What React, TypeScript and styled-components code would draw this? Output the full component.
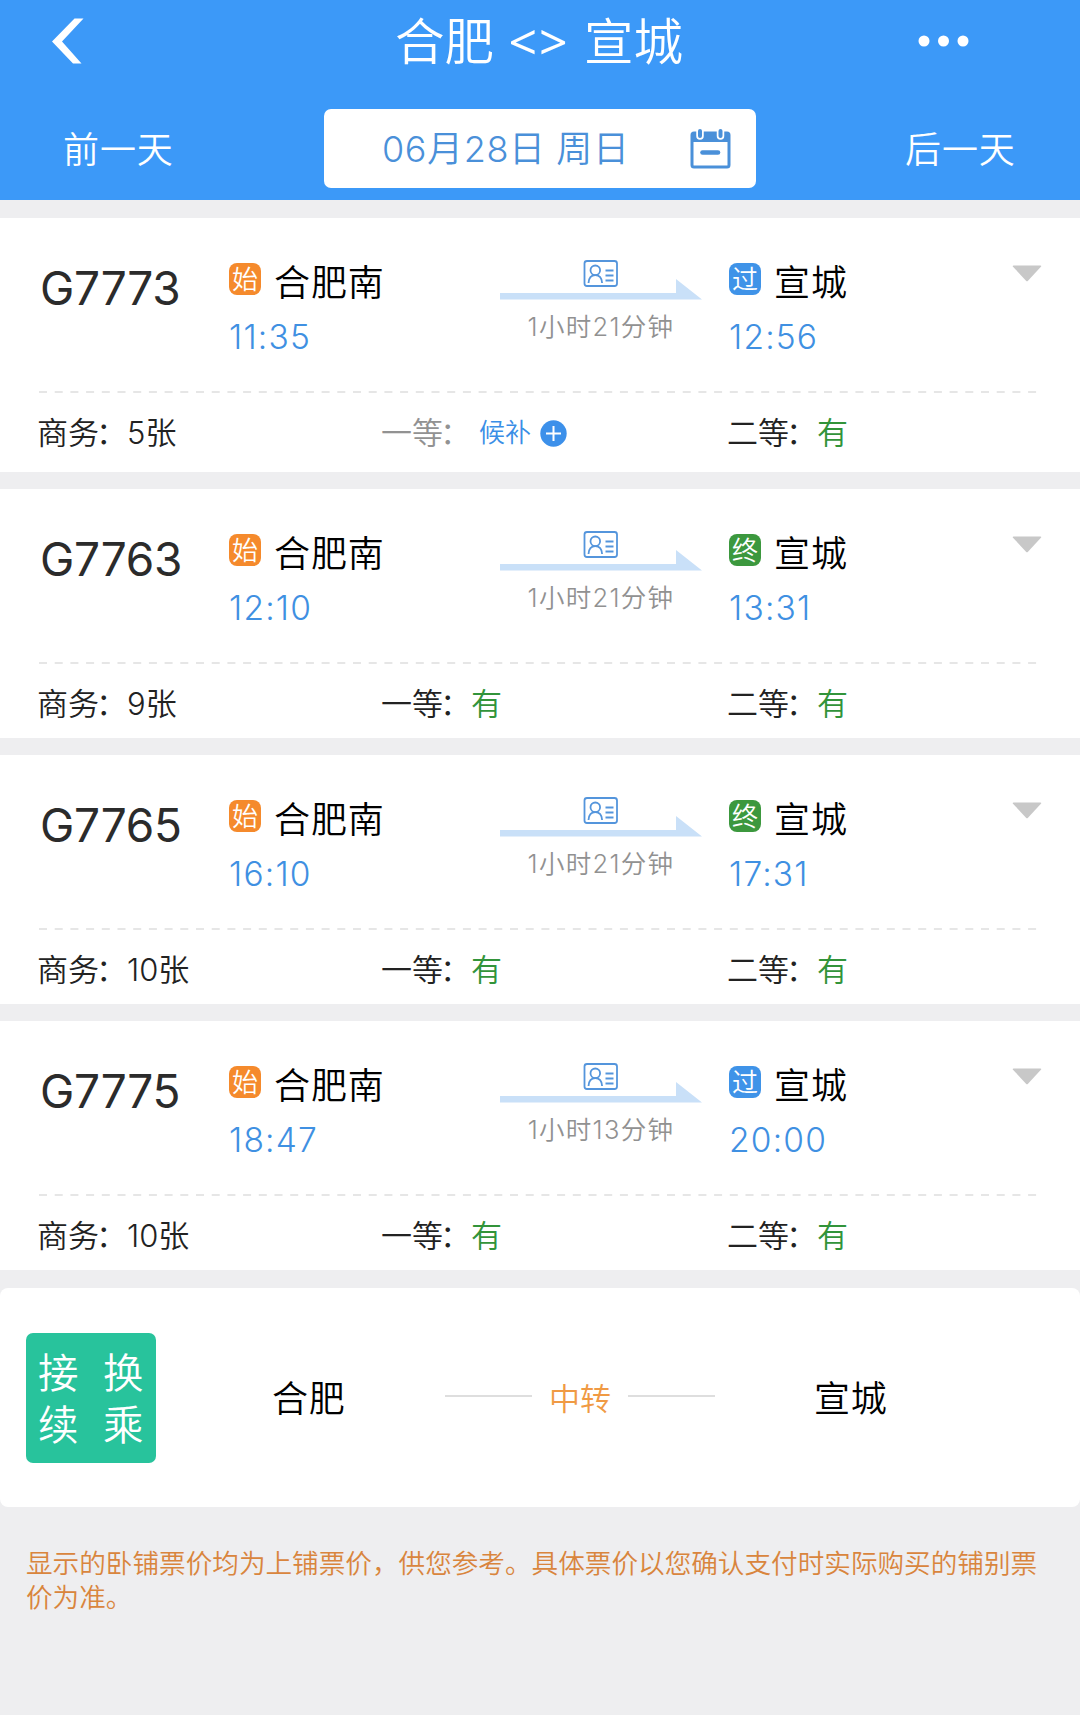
import React from "react";
import styled, { createGlobalStyle } from "styled-components";

const Global = createGlobalStyle`
  * { box-sizing: border-box; }
  body {
    margin: 0;
    background: #eeeef0;
    font-family: Inter, "Noto Sans CJK SC", sans-serif;
    font-weight: 350;
    color: #2b2b2b;
  }
`;

const Page = styled.div`
  width: 1080px;
  height: 1715px;
  overflow: hidden;
  background: #eeeef0;
`;

const Header = styled.header`
  height: 200px;
  margin-bottom: 18px;
  background: #3c99f8;
  color: #fff;
`;

const TitleBar = styled.div`
  display: grid;
  grid-template-columns: 324px 432px 1fr;
  align-items: center;
  height: 82px;
`;

const BackIcon = styled.svg`
  display: block;
  margin-left: 50px;
`;

const MoreIcon = styled.svg`
  display: block;
  margin-left: 160px;
`;

const Title = styled.h1`
  margin: 1px 2px 0 0;
  font-size: 49.5px;
  line-height: 60px;
  font-weight: 350;
  text-align: center;
  white-space: pre;
`;

const Arrows = styled.span`
  display: inline-block;
  width: 90px;
  font-family: "Noto Sans", sans-serif;
  font-size: 50px;
  font-weight: 400;
  letter-spacing: 2px;
`;

const DateBar = styled.div`
  display: grid;
  grid-template-columns: 324px 432px 1fr;
  align-items: center;
  margin-top: 27px;
  height: 79px;
`;

const DayLink = styled.div<{ $indent: number }>`
  padding: 2px 0 0 ${(p) => p.$indent}px;
  font-size: 36px;
  line-height: 44px;
  letter-spacing: 0.9px;
`;

const DateBox = styled.div`
  display: flex;
  align-items: center;
  justify-content: space-between;
  height: 79px;
  padding: 0 25px 0 58px;
  border-radius: 7px;
  background: #fff;
  color: #4a90d9;
  font-size: 36px;
  line-height: 44px;
  letter-spacing: 0.6px;
`;

const Card = styled.section<{ $tall?: boolean }>`
  height: ${(p) => (p.$tall ? 254 : 249)}px;
  margin-bottom: 17px;
  background: #fff;
`;

const Trip = styled.div`
  display: grid;
  grid-template-columns: 189px 271px 229px 273px 1fr;
  height: 173px;
  padding: 38px 0 0 40px;
`;

const TrainNo = styled.div`
  padding-top: 4px;
  font-size: 46px;
  line-height: 56px;
  font-weight: 375;
  letter-spacing: -0.3px;
  color: #2b2b2b;
`;

const StationRow = styled.div`
  display: flex;
  align-items: center;
  gap: 13px;
  height: 48px;
  color: #000;
  font-size: 36px;
  letter-spacing: 0.9px;
`;

const Tag = styled.span<{ $tone: string }>`
  display: flex;
  align-items: center;
  justify-content: center;
  width: 32px;
  height: 32px;
  margin-top: -3px;
  border-radius: 8px;
  background: ${(p) => p.$tone};
  color: #fff;
  font-size: 26px;
  line-height: 32px;
  letter-spacing: 0;
`;

const TagText = styled.span`
  padding-top: 2px;
`;

const Time = styled.div`
  margin-top: 13px;
  font-size: 33.5px;
  line-height: 40px;
  letter-spacing: 1.2px;
  color: #3f90e2;
`;

const Route = styled.div`
  display: flex;
  flex-direction: column;
  width: 202px;
`;

const Duration = styled.div`
  margin-top: 12px;
  font-size: 25.5px;
  line-height: 30px;
  letter-spacing: 1.3px;
  text-align: center;
  color: #919191;
`;

const Caret = styled.svg`
  display: block;
  margin: 9px 0 0 10px;
`;

const Divider = styled.svg`
  display: block;
  margin-left: 39px;
`;

const Seats = styled.div`
  display: grid;
  grid-template-columns: 344px 346px 1fr;
  padding-left: 37px;
  margin-top: 20px;
  height: 40px;
`;

const Seat = styled.div<{ $muted?: boolean }>`
  display: flex;
  align-items: center;
  font-size: 31px;
  line-height: 40px;
  white-space: nowrap;
  color: ${(p) => (p.$muted ? "#929292" : "#222")};
`;

const SeatLabel = styled.span`
  width: 90px;
`;

const Colon = styled.span`
  margin-left: -3px;
`;

const Available = styled.span`
  color: #32943a;
`;

const Waitlist = styled.span`
  display: flex;
  align-items: center;
  gap: 9px;
  margin-left: 8px;
  font-size: 26px;
  color: #3a8ee6;
`;

const Transfer = styled.section`
  display: grid;
  grid-template-columns: 246px 173px 369px 1fr;
  align-items: center;
  height: 219px;
  margin-top: 18px;
  padding-left: 26px;
  border-radius: 8px;
  background: #fff;
  color: #000;
`;

const TransferBadge = styled.div`
  display: grid;
  grid-template-columns: 65px 40px;
  grid-auto-rows: 52px;
  align-content: center;
  width: 130px;
  height: 130px;
  padding: 5px 0 0 12px;
  border-radius: 7px;
  background: #28c39c;
  color: #fff;
  font-size: 40.5px;
  line-height: 52px;
`;

const City = styled.div`
  font-size: 36px;
  line-height: 44px;
  letter-spacing: 0.8px;
  padding-top: 3px;
`;

const Via = styled.div`
  display: flex;
  align-items: center;
  gap: 17px;
  color: #f09a44;
  font-size: 31px;
  line-height: 40px;
  padding-top: 3px;
`;

const ViaLine = styled.span`
  width: 87px;
  height: 2px;
  margin-top: -6px;
  background: #dedede;
`;

const Note = styled.p`
  margin: 39px 0 0 26px;
  width: 1030px;
  font-size: 26.62px;
  line-height: 34px;
  color: #d9853d;
`;

const tones = { 始: "#f58a2c", 过: "#3f93e8", 终: "#3c983e" };

type Train = {
  no: string;
  depart: string;
  arrive: string;
  duration: string;
  end: "过" | "终";
  business: string;
  first: "有" | "候补";
};

const trains: Train[] = [
  { no: "G7773", depart: "11:35", arrive: "12:56", duration: "1小时21分钟", end: "过", business: "5张", first: "候补" },
  { no: "G7763", depart: "12:10", arrive: "13:31", duration: "1小时21分钟", end: "终", business: "9张", first: "有" },
  { no: "G7765", depart: "16:10", arrive: "17:31", duration: "1小时21分钟", end: "终", business: "10张", first: "有" },
  { no: "G7775", depart: "18:47", arrive: "20:00", duration: "1小时13分钟", end: "过", business: "10张", first: "有" },
];

const CalendarIcon = () => (
  <svg width="41" height="41" viewBox="0 0 41 41">
    <rect x="2" y="5" width="37" height="34" rx="2" fill="#fff" stroke="#4a90d9" strokeWidth="3" />
    <path d="M1 5h39v9H1z" fill="#4a90d9" />
    <g stroke="#fff" strokeWidth="7.500" strokeLinecap="round">
      <path d="M10 3v5M30.500 3v5" />
    </g>
    <g stroke="#4a90d9" strokeWidth="4" strokeLinecap="round">
      <path d="M10 3v5M30.500 3v5" />
      <path d="M12.500 24.500h15.500" strokeWidth="4.6" />
    </g>
  </svg>
);

const RouteArt = () => (
  <svg width="202" height="44" viewBox="0 0 202 44" fill="none">
    <path d="M0 37h176V23L202 43.500H0z" fill="#c9e0f8" />
    <g stroke="#5495dc" strokeWidth="1.8">
      <rect x="84.500" y="5" width="32.5" height="25" rx="2.5" />
      <circle cx="95.300" cy="14.3" r="4.800" />
      <path d="M88.500 27c.3-5.300 3-7.900 6.8-7.900s6.5 2.600 6.800 7.900M105.500 14.500h8M105.500 19.500h8M105.500 24.500h8" />
    </g>
  </svg>
);

const PlusIcon = () => (
  <svg width="27" height="27" viewBox="0 0 27 27">
    <circle cx="13.500" cy="13.500" r="13.200" fill="#3c90ea" />
    <path d="M13.500 6v15M6 13.500h15" stroke="#fff" strokeWidth="2" />
  </svg>
);

const Station = ({ tag, name, time }: { tag: keyof typeof tones; name: string; time: string }) => (
  <div>
    <StationRow>
      <Tag $tone={tones[tag]}>
        <TagText>{tag}</TagText>
      </Tag>
      {name}
    </StationRow>
    <Time>{time}</Time>
  </div>
);

const Label = ({ text }: { text: string }) => (
  <SeatLabel>
    {text}
    <Colon>：</Colon>
  </SeatLabel>
);

const TrainCard = ({ train }: { train: Train }) => {
  const waiting = train.first === "候补";
  return (
    <Card $tall={waiting}>
      <Trip>
        <TrainNo>{train.no}</TrainNo>
        <Station tag="始" name="合肥南" time={train.depart} />
        <Route>
          <RouteArt />
          <Duration>{train.duration}</Duration>
        </Route>
        <Station tag={train.end} name="宣城" time={train.arrive} />
        <Caret width="30" height="17" viewBox="0 0 30 17">
          <path d="M1.500 .5h27q1.500 0 .4 1.200L16 15.700q-1 1-2 0L1 1.700Q0 .5 1.500 .5z" fill="#c8c8c8" />
        </Caret>
      </Trip>
      <Divider width="1002" height="2">
        <path d="M0 1h1002" stroke="#e6e6e6" strokeWidth="2" strokeDasharray="8 7.700" />
      </Divider>
      <Seats>
        <Seat>
          <Label text="商务" />
          {train.business}
        </Seat>
        <Seat $muted={waiting}>
          <Label text="一等" />
          {waiting ? (
            <Waitlist>
              候补
              <PlusIcon />
            </Waitlist>
          ) : (
            <Available>有</Available>
          )}
        </Seat>
        <Seat>
          <Label text="二等" />
          <Available>有</Available>
        </Seat>
      </Seats>
    </Card>
  );
};

export default function App() {
  return (
    <Page>
      <Global />
      <Header>
        <TitleBar>
          <BackIcon width="36" height="48" viewBox="0 0 36 48">
            <path d="M24.500 1.500H33.500L12 24.500 31.500 46.500H23L2 24.500z" fill="#fff" />
          </BackIcon>
          <Title>
            合肥<Arrows>&lt;&gt;</Arrows>宣城
          </Title>
          <MoreIcon width="56" height="14" viewBox="0 0 56 14" fill="#fff">
            <circle cx="8" cy="7" r="5.500" />
            <circle cx="27.500" cy="7" r="5.500" />
            <circle cx="47" cy="7" r="5.500" />
          </MoreIcon>
        </TitleBar>
        <DateBar>
          <DayLink $indent={63}>前一天</DayLink>
          <DateBox>
            06月28日 周日
            <CalendarIcon />
          </DateBox>
          <DayLink $indent={149}>后一天</DayLink>
        </DateBar>
      </Header>
      {trains.map((t) => (
        <TrainCard key={t.no} train={t} />
      ))}
      <Transfer>
        <TransferBadge>
          <span>接</span>
          <span>换</span>
          <span>续</span>
          <span>乘</span>
        </TransferBadge>
        <City>合肥</City>
        <Via>
          <ViaLine />
          中转
          <ViaLine />
        </Via>
        <City>宣城</City>
      </Transfer>
      <Note>显示的卧铺票价均为上铺票价，供您参考。具体票价以您确认支付时实际购买的铺别票价为准。</Note>
    </Page>
  );
}
